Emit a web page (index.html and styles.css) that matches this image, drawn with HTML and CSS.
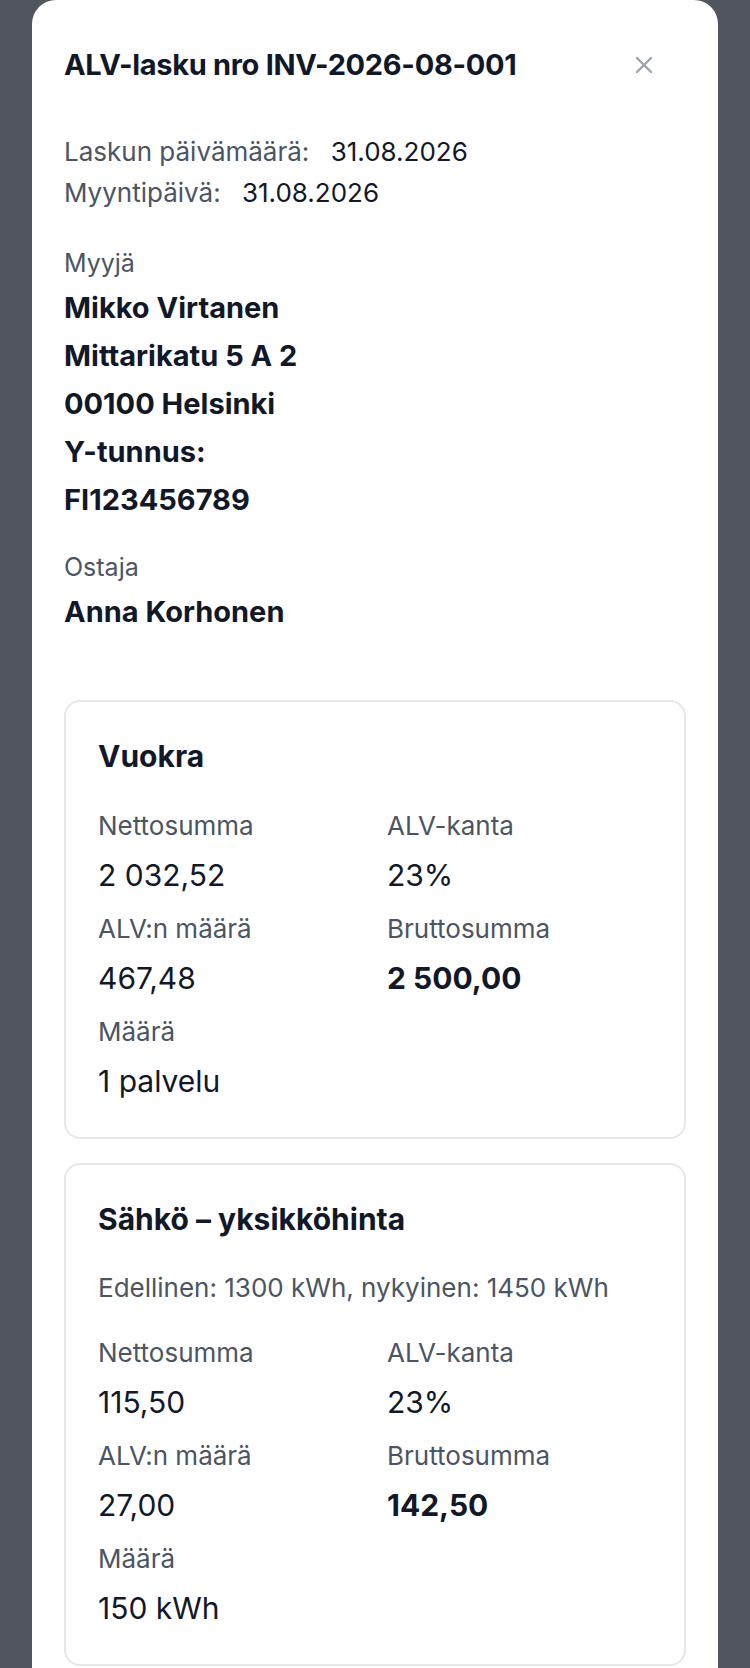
FILE: index.html
```html
<!DOCTYPE html>
<html lang="fi">
<head>
    <meta charset="UTF-8">
    <meta name="viewport" content="width=device-width, initial-scale=1.0">
    <title>ALV-lasku</title>
    <link rel="stylesheet" href="styles.css">
</head>
<body>
    <!-- Invoice modal -->
    <div class="modal">
        <div class="modal-header">
            <h1 class="modal-title">ALV-lasku nro INV-2026-08-001</h1>
            <button class="close-btn" aria-label="Sulje">
                <svg width="18" height="18" viewBox="0 0 18 18" fill="none" stroke="currentColor" stroke-width="2.4" stroke-linecap="round">
                    <path d="M2 2 L16 16 M16 2 L2 16"/>
                </svg>
            </button>
        </div>

        <div class="dates">
            <div class="date-row"><span class="muted">Laskun päivämäärä:</span> <span class="date-value">31.08.2026</span></div>
            <div class="date-row"><span class="muted">Myyntipäivä:</span> <span class="date-value">31.08.2026</span></div>
        </div>

        <div class="party seller">
            <div class="party-label">Myyjä</div>
            <div class="party-line">Mikko Virtanen</div>
            <div class="party-line">Mittarikatu 5 A 2</div>
            <div class="party-line">00100 Helsinki</div>
            <div class="party-line">Y-tunnus:</div>
            <div class="party-line">FI123456789</div>
        </div>

        <div class="party buyer">
            <div class="party-label">Ostaja</div>
            <div class="party-line">Anna Korhonen</div>
        </div>

        <div class="item-card">
            <h2 class="item-title">Vuokra</h2>
            <div class="item-grid">
                <div class="field">
                    <div class="field-label">Nettosumma</div>
                    <div class="field-value">2 032,52</div>
                </div>
                <div class="field">
                    <div class="field-label">ALV-kanta</div>
                    <div class="field-value">23%</div>
                </div>
                <div class="field">
                    <div class="field-label">ALV:n määrä</div>
                    <div class="field-value">467,48</div>
                </div>
                <div class="field">
                    <div class="field-label">Bruttosumma</div>
                    <div class="field-value strong">2 500,00</div>
                </div>
                <div class="field">
                    <div class="field-label">Määrä</div>
                    <div class="field-value">1 palvelu</div>
                </div>
            </div>
        </div>

        <div class="item-card">
            <h2 class="item-title">Sähkö – yksikköhinta</h2>
            <p class="item-note">Edellinen: 1300 kWh, nykyinen: 1450 kWh</p>
            <div class="item-grid">
                <div class="field">
                    <div class="field-label">Nettosumma</div>
                    <div class="field-value">115,50</div>
                </div>
                <div class="field">
                    <div class="field-label">ALV-kanta</div>
                    <div class="field-value">23%</div>
                </div>
                <div class="field">
                    <div class="field-label">ALV:n määrä</div>
                    <div class="field-value">27,00</div>
                </div>
                <div class="field">
                    <div class="field-label">Bruttosumma</div>
                    <div class="field-value strong">142,50</div>
                </div>
                <div class="field">
                    <div class="field-label">Määrä</div>
                    <div class="field-value">150 kWh</div>
                </div>
            </div>
        </div>
    </div>
</body>
</html>
```

FILE: styles.css
```css
:root {
    --overlay: #51555e;
    --text: #111827;
    --text-muted: #4b5563;
    --border: #e5e7eb;
    --icon: #9ca3af;
}

* {
    box-sizing: border-box;
    margin: 0;
    font-family: 'Inter', 'Noto Sans', sans-serif;
}

html, body {
    height: 100%;
    overflow: hidden;
}

body {
    background: var(--overlay);
    color: var(--text);
}

.modal {
    margin: 0 32px;
    background: white;
    border-radius: 24px 24px 0 0;
    padding: 45px 32px 40px;
    min-height: 100%;
}

.modal-header {
    display: flex;
    align-items: center;
    justify-content: space-between;
}

.modal-title {
    font-size: 29px;
    line-height: 40px;
    font-weight: 700;
    letter-spacing: -0.3px;
}

.close-btn {
    background: none;
    border: none;
    padding: 11px;
    margin-right: 22px;
    color: var(--icon);
    display: flex;
    cursor: pointer;
}

.dates {
    margin-top: 46px;
    font-size: 26px;
    line-height: 41px;
}

.muted {
    color: var(--text-muted);
}

.date-value {
    margin-left: 14px;
}

.party {
    margin-top: 34px;
}

.buyer {
    margin-top: 27px;
}

.party-label {
    font-size: 25px;
    line-height: 32px;
    color: var(--text-muted);
    margin-bottom: 5px;
}

.party-line {
    font-size: 29px;
    line-height: 48px;
    font-weight: 700;
}

.item-card {
    border: 2px solid var(--border);
    border-radius: 16px;
    padding: 32px 32px 36px;
    margin-top: 24px;
}

.buyer + .item-card {
    margin-top: 64px;
}

.item-title {
    font-size: 30px;
    line-height: 45px;
    font-weight: 700;
}

.item-note {
    margin-top: 30px;
    font-size: 26px;
    line-height: 32px;
    color: var(--text-muted);
}

.item-grid {
    margin-top: 31px;
    display: grid;
    grid-template-columns: 1fr 1fr;
    column-gap: 24px;
    row-gap: 18px;
}

.item-note + .item-grid {
    margin-top: 33px;
}

.field-label {
    font-size: 26px;
    line-height: 32px;
    color: var(--text-muted);
}

.field-value {
    margin-top: 13px;
    font-size: 30px;
    line-height: 40px;
}

.field-value.strong {
    font-weight: 700;
}
```
